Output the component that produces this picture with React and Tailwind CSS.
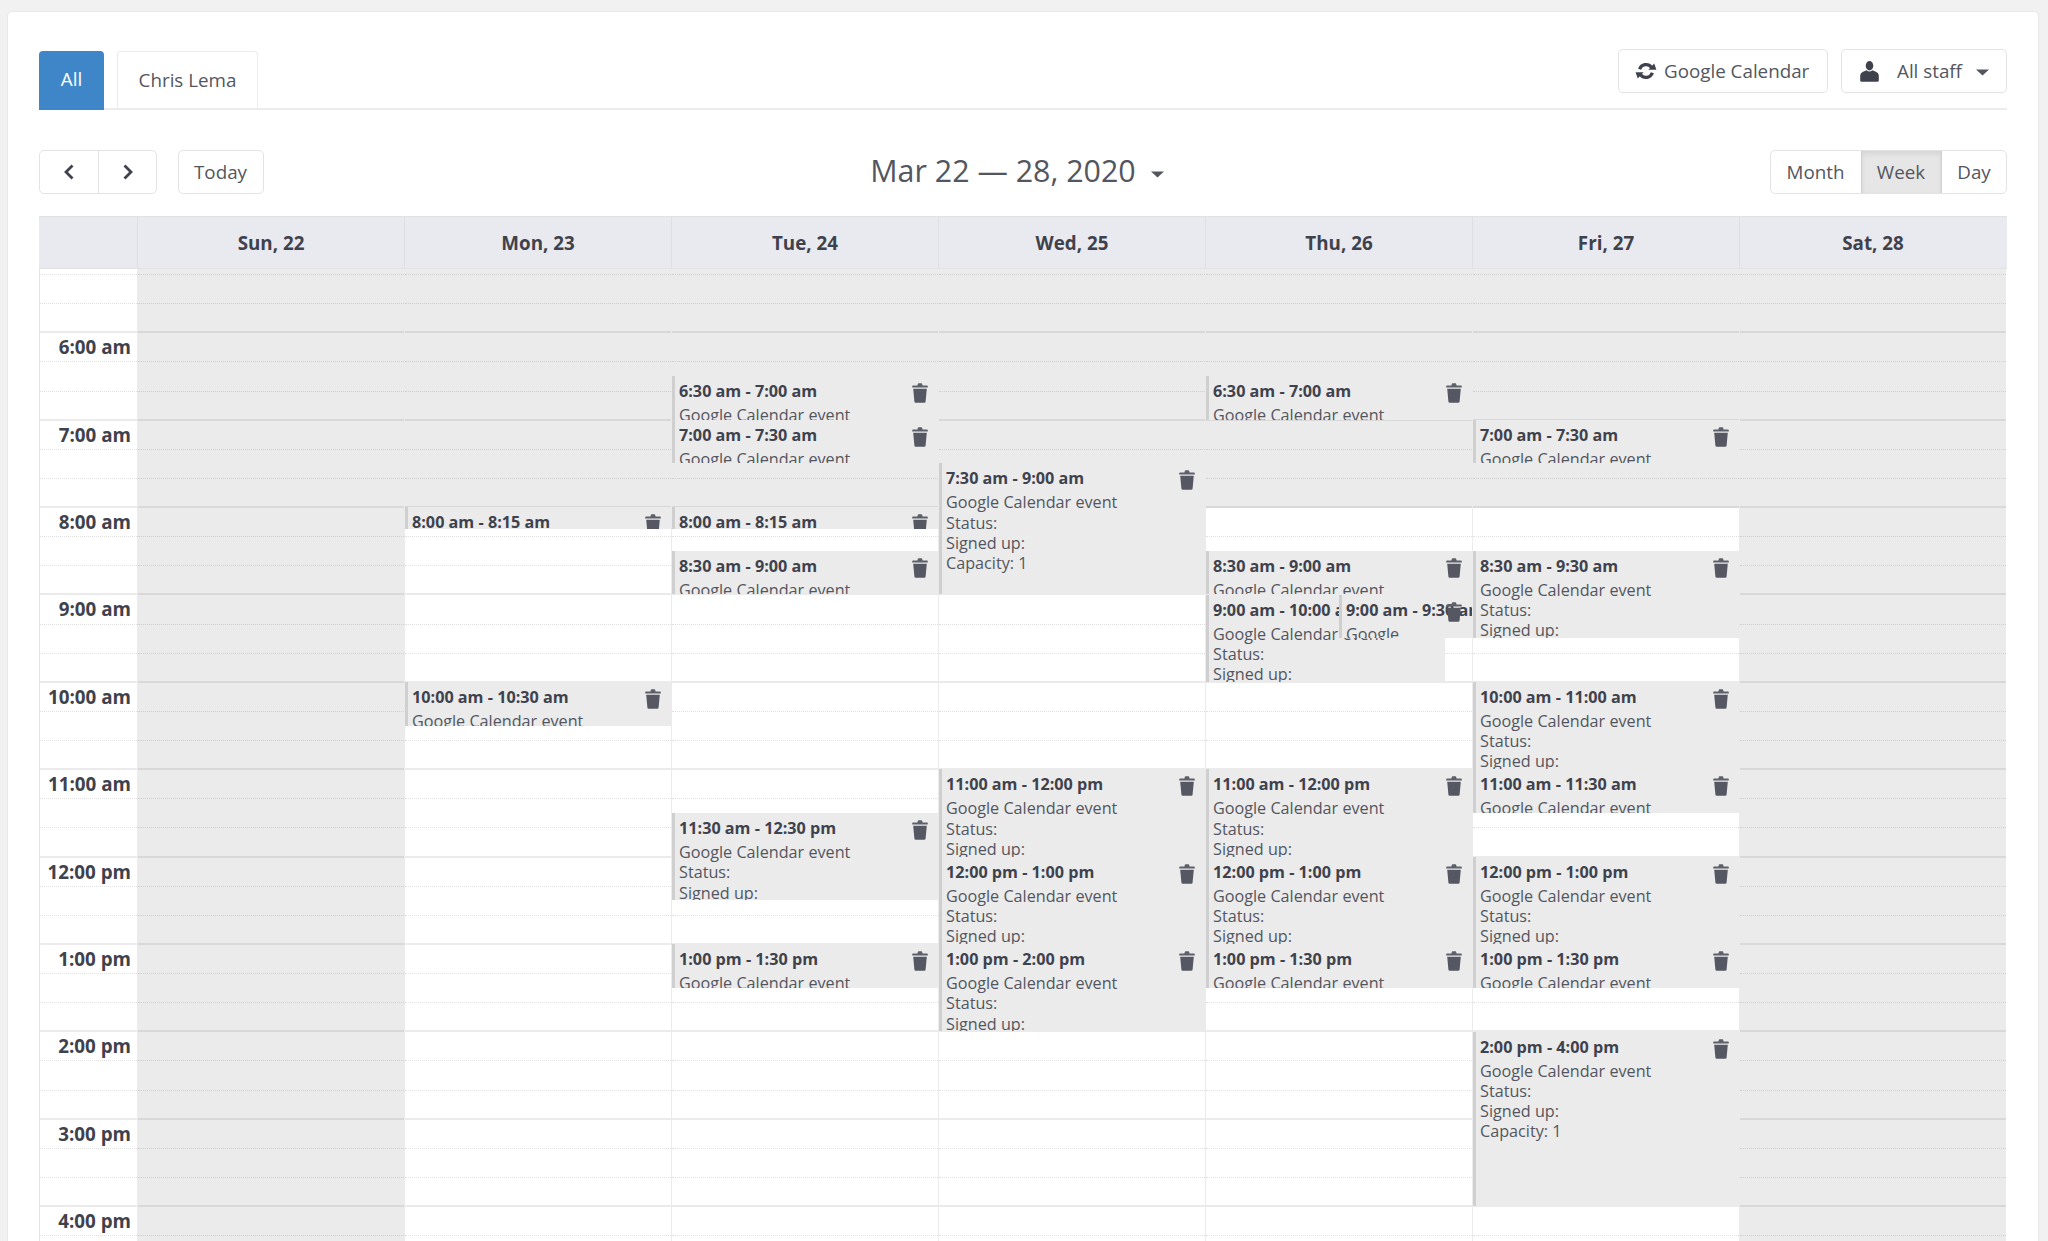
import React from "react";

const HOUR = 87.4;
const ORIGIN = 63.3; // px from pane top to 6:00 am
const days = ["Sun, 22", "Mon, 23", "Tue, 24", "Wed, 25", "Thu, 26", "Fri, 27", "Sat, 28"];
const G = ["Google Calendar event"];
const GS = ["Google Calendar event", "Status:", "Signed up:"];
const GC = ["Google Calendar event", "Status:", "Signed up:", "Capacity: 1"];

const events = [
  { d: 1, s: 8, e: 8.25, t: "8:00 am - 8:15 am", l: [] },
  { d: 1, s: 10, e: 10.5, t: "10:00 am - 10:30 am", l: G },
  { d: 2, s: 6.5, e: 7, t: "6:30 am - 7:00 am", l: G },
  { d: 2, s: 7, e: 7.5, t: "7:00 am - 7:30 am", l: G },
  { d: 2, s: 8, e: 8.25, t: "8:00 am - 8:15 am", l: [] },
  { d: 2, s: 8.5, e: 9, t: "8:30 am - 9:00 am", l: G },
  { d: 2, s: 11.5, e: 12.5, t: "11:30 am - 12:30 pm", l: GS },
  { d: 2, s: 13, e: 13.5, t: "1:00 pm - 1:30 pm", l: G },
  { d: 3, s: 7.5, e: 9, t: "7:30 am - 9:00 am", l: GC },
  { d: 3, s: 11, e: 12, t: "11:00 am - 12:00 pm", l: GS },
  { d: 3, s: 12, e: 13, t: "12:00 pm - 1:00 pm", l: GS },
  { d: 3, s: 13, e: 14, t: "1:00 pm - 2:00 pm", l: GS },
  { d: 4, s: 6.5, e: 7, t: "6:30 am - 7:00 am", l: G },
  { d: 4, s: 8.5, e: 9, t: "8:30 am - 9:00 am", l: G },
  { d: 4, s: 9, e: 10, t: "9:00 am - 10:00 am", l: GS, right: 27 },
  { d: 4, s: 9, e: 9.5, t: "9:00 am - 9:30 am", l: G, left: 133 },
  { d: 4, s: 11, e: 12, t: "11:00 am - 12:00 pm", l: GS },
  { d: 4, s: 12, e: 13, t: "12:00 pm - 1:00 pm", l: GS },
  { d: 4, s: 13, e: 13.5, t: "1:00 pm - 1:30 pm", l: G },
  { d: 5, s: 7, e: 7.5, t: "7:00 am - 7:30 am", l: G },
  { d: 5, s: 8.5, e: 9.5, t: "8:30 am - 9:30 am", l: GS },
  { d: 5, s: 10, e: 11, t: "10:00 am - 11:00 am", l: GS },
  { d: 5, s: 11, e: 11.5, t: "11:00 am - 11:30 am", l: G },
  { d: 5, s: 12, e: 13, t: "12:00 pm - 1:00 pm", l: GS },
  { d: 5, s: 13, e: 13.5, t: "1:00 pm - 1:30 pm", l: G },
  { d: 5, s: 14, e: 16, t: "2:00 pm - 4:00 pm", l: GC },
];

const hourLabels = { 6: "6:00 am", 7: "7:00 am", 8: "8:00 am", 9: "9:00 am", 10: "10:00 am", 11: "11:00 am", 12: "12:00 pm", 13: "1:00 pm", 14: "2:00 pm", 15: "3:00 pm", 16: "4:00 pm" };

// slots: each is 1/3 of an hour, beginning at 5:20 am
const slots = [];
for (let i = 0; i < 35; i++) slots.push(5 + 1 / 3 + i / 3);

function Trash() {
  return (
    <svg width="16" height="20" viewBox="0 0 16 20" className="absolute top-[7px] right-[10px]">
      <path d="M5.4 2.4 L5.9 0.7 Q6 0.3 6.4 0.3 H9.6 Q10 0.3 10.1 0.7 L10.6 2.4 H15 Q15.8 2.4 15.8 3.2 V4.6 H0.2 V3.2 Q0.2 2.4 1 2.4 Z" fill="#5d606b" />
      <path d="M1.2 5.8 H14.8 L13.6 18.6 Q13.5 19.8 12.3 19.8 H3.7 Q2.5 19.8 2.4 18.6 Z" fill="#555863" />
    </svg>
  );
}

function Event({ ev }) {
  const top = ORIGIN + (ev.s - 6) * HOUR;
  const height = (ev.e - ev.s) * HOUR;
  return (
    <div
      className="absolute overflow-hidden bg-[#ebebeb] border-l-[3px] border-[#cfcfcf] pl-[4px] pr-[30px] text-[16.2px] text-[#53565f]"
      style={{ top, height, left: ev.left ?? 0, right: ev.right ?? 0 }}
    >
      <div className="mt-[4px] h-[22px] leading-[22px] font-bold text-[#3f424c] whitespace-nowrap">{ev.t}</div>
      <div className="mt-[3px] leading-[20.3px]">
        {ev.l.map((x) => (
          <div key={x}>{x}</div>
        ))}
      </div>
      <Trash />
    </div>
  );
}

function Slot({ t, gray, children }) {
  const isHourEnd = Math.abs(((t + 1 / 3) % 1)) < 0.01 || Math.abs(((t + 1 / 3) % 1) - 1) < 0.01;
  return (
    <div
      className={
        "relative h-[29.13px] shrink-0 " +
        (gray ? "bg-[#ebebeb] " : "bg-white ") +
        (isHourEnd ? "border-b-2 border-solid border-black/[0.08]" : "border-b border-dotted border-black/[0.12]")
      }
    >
      {children}
    </div>
  );
}

function DayColumn({ idx }) {
  const isGray = (t) => idx === 0 || idx === 6 || t < 7.99;
  return (
    <div className="relative w-[267px] shrink-0 flex flex-col border-l border-black/[0.08]">
      <div className={"h-[6px] shrink-0 border-b border-dotted border-black/[0.12] " + (isGray(5) ? "bg-[#ebebeb]" : "bg-white")} />
      {slots.map((t) => (
        <Slot key={t} t={t} gray={isGray(t)} />
      ))}
      {events
        .filter((e) => e.d === idx)
        .map((e) => (
          <Event key={e.t + e.s} ev={e} />
        ))}
    </div>
  );
}

function TimeColumn() {
  return (
    <div className="w-[98px] shrink-0 flex flex-col bg-white border-l border-[#e4e4e4]">
      <div className="h-[6px] shrink-0 border-b border-dotted border-black/[0.12]" />
      {slots.map((t) => (
        <Slot key={t} t={t}>
          {hourLabels[Math.round(t * 3) / 3] && (
            <div className="absolute right-[6px] top-[1px] text-[18.8px] leading-[26px] font-bold text-[#3f424c] whitespace-nowrap">
              {hourLabels[Math.round(t * 3) / 3]}
            </div>
          )}
        </Slot>
      ))}
    </div>
  );
}

function RefreshIcon() {
  return (
    <svg width="22" height="20" viewBox="0 0 22 20" fill="none">
      <path d="M4.6 8.2 A6.8 6.8 0 0 1 16.4 6.2" stroke="#3f424c" strokeWidth="3.2" />
      <path d="M17.4 11.8 A6.8 6.8 0 0 1 5.6 13.8" stroke="#3f424c" strokeWidth="3.2" />
      <path d="M21.4 8.8 H13.4 L19.2 2.6 Z" fill="#3f424c" />
      <path d="M0.6 11.2 H8.6 L2.8 17.4 Z" fill="#3f424c" />
    </svg>
  );
}

function UserIcon() {
  return (
    <svg width="19" height="21" viewBox="0 0 19 21">
      <ellipse cx="9.5" cy="4.8" rx="3.8" ry="4.7" fill="#3f424c" />
      <path d="M6.6 9.2 Q9.5 12 12.4 9.2 L16.4 11 Q18.8 12 18.8 14.6 V19.5 Q18.8 20.8 17.4 20.8 H1.6 Q0.2 20.8 0.2 19.5 V14.6 Q0.2 12 2.6 11 Z" fill="#3f424c" />
    </svg>
  );
}

const btn = "h-[44px] flex items-center bg-white border border-[#e3e3e3] text-[18.8px] text-[#53565f]";

export default function App() {
  return (
    <div
      className="h-[1241px] w-[2048px] overflow-hidden bg-[#f1f1f1] pt-[11px] pl-[7px]"
      style={{ fontFamily: '"Open Sans", sans-serif' }}
    >
      <div className="w-[2032px] h-[1400px] bg-white border border-[#e8e8e8] rounded-[5px] px-[31px] pt-[37px]">
        {/* tabs row */}
        <div className="h-[61px] flex items-start justify-between border-b-2 border-[#ececec]">
          <div className="flex items-start gap-[13px] mt-[2px]">
            <div className="w-[65px] h-[59px] -mb-[2px] pt-[14px] flex justify-center items-start bg-[#3f86c9] rounded-t-[4px] text-[18.8px] leading-[28px] text-white">
              All
            </div>
            <div className="w-[141px] h-[58px] pt-[14px] flex justify-center items-start border border-b-0 border-[#ececec] rounded-t-[4px] text-[18.8px] leading-[28px] text-[#53565f]">
              Chris Lema
            </div>
          </div>
          <div className="flex gap-[13px]">
            <div className={btn + " w-[210px] rounded-[5px] pl-[16px] gap-[7px]"}>
              <RefreshIcon />
              <span>Google Calendar</span>
            </div>
            <div className={btn + " w-[166px] rounded-[5px] pl-[18px]"}>
              <UserIcon />
              <span className="ml-[18px]">All staff</span>
              <svg width="13" height="7" viewBox="0 0 13 7" className="ml-[14px] mt-[2px]">
                <path d="M0 0.5 H13 L6.5 6.5 Z" fill="#53565f" />
              </svg>
            </div>
          </div>
        </div>

        {/* toolbar */}
        <div className="mt-[40px] h-[44px] flex items-center justify-between">
          <div className="flex gap-[21px]">
            <div className={btn + " rounded-[5px] w-[118px]"}>
              <div className="w-[59px] h-full flex items-center justify-center border-r border-[#e3e3e3]">
                <svg width="12" height="16" viewBox="0 0 12 16" fill="none">
                  <path d="M9.5 1.5 L3 8 L9.5 14.5" stroke="#3f424c" strokeWidth="2.8" />
                </svg>
              </div>
              <div className="flex-1 h-full flex items-center justify-center">
                <svg width="12" height="16" viewBox="0 0 12 16" fill="none">
                  <path d="M2.5 1.5 L9 8 L2.5 14.5" stroke="#3f424c" strokeWidth="2.8" />
                </svg>
              </div>
            </div>
            <div className={btn + " rounded-[5px] w-[86px] justify-center pr-[1px]"}>Today</div>
          </div>
          <div className="flex items-center">
            <span className="text-[30.4px] leading-[44px] -mt-[2px] text-[#53565f]">Mar 22 — 28, 2020</span>
            <svg width="13" height="7" viewBox="0 0 13 7" className="ml-[15px] mt-[4px]">
              <path d="M0 0.5 H13 L6.5 6.5 Z" fill="#53565f" />
            </svg>
          </div>
          <div className={btn + " rounded-[5px] w-[237px]"}>
            <div className="w-[90px] h-full flex items-center justify-center pr-[1px]">Month</div>
            <div className="w-[81px] h-full flex items-center justify-center bg-[#e6e6e6] border-x border-[#d0d0d0] shadow-[inset_0_3px_5px_rgba(0,0,0,0.08)] pr-[1px]">Week</div>
            <div className="flex-1 h-full flex items-center justify-center">Day</div>
          </div>
        </div>

        {/* calendar */}
        <div className="mt-[22px] w-[1968px]">
          <div className="h-[53px] flex bg-[#e9eaef] border-t border-b border-[#e2e2e2]">
            <div className="w-[98px] shrink-0" />
            {days.map((d) => (
              <div
                key={d}
                className="w-[267px] shrink-0 flex items-center justify-center border-l border-[#dedfe3] pt-[2px] text-[18.8px] font-bold text-[#3f424c]"
              >
                {d}
              </div>
            ))}
          </div>
          <div className="flex">
            <TimeColumn />
            {days.map((d, i) => (
              <DayColumn key={d} idx={i} />
            ))}
          </div>
        </div>
      </div>
    </div>
  );
}
